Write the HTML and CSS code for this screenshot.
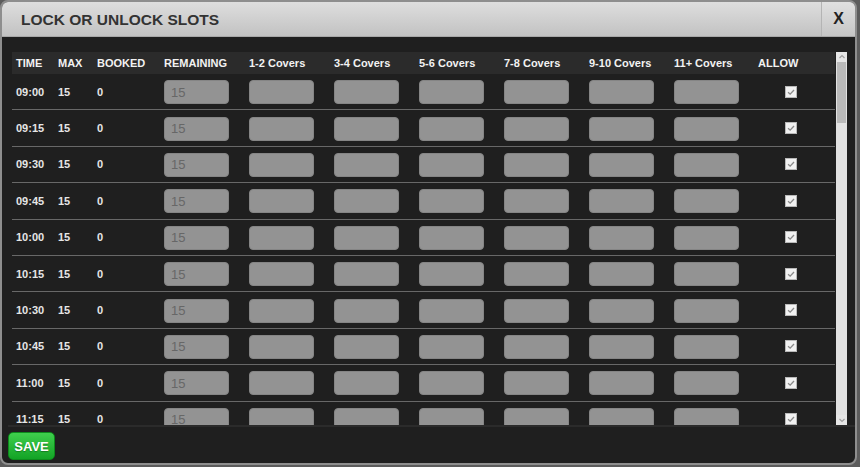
FILE: index.html
```html
<!DOCTYPE html>
<html lang="en">
<head>
  <meta charset="UTF-8" />
  <title>Lock or Unlock Slots</title>
  <link rel="stylesheet" href="styles.css">
</head>
<body>

  <div class="dialog">
    <!-- Title bar -->
    <div class="titlebar">
      <h2 class="title">LOCK OR UNLOCK SLOTS</h2>
      <button class="close" type="button">X</button>
    </div>

    <div class="dialog-body">
      <div class="scroll-area">
        <div class="slots">
          <div class="row head">
            <span>TIME</span><span>MAX</span><span>BOOKED</span><span>REMAINING</span>
            <span>1-2 Covers</span><span>3-4 Covers</span><span>5-6 Covers</span>
            <span>7-8 Covers</span><span>9-10 Covers</span><span>11+ Covers</span>
            <span>ALLOW</span>
          </div>

          <div class="row">
            <span>09:00</span><span>15</span><span>0</span>
            <span><input class="cell-input" type="text" value="15" readonly></span>
            <span><input class="cell-input" type="text"></span><span><input class="cell-input" type="text"></span>
            <span><input class="cell-input" type="text"></span><span><input class="cell-input" type="text"></span>
            <span><input class="cell-input" type="text"></span><span><input class="cell-input" type="text"></span>
            <span class="allow"><span class="check"><svg viewBox="0 0 12 12"><path d="M2.5 6.2 L5 8.6 L9.6 3.6"/></svg></span></span>
          </div>
          <div class="row">
            <span>09:15</span><span>15</span><span>0</span>
            <span><input class="cell-input" type="text" value="15" readonly></span>
            <span><input class="cell-input" type="text"></span><span><input class="cell-input" type="text"></span>
            <span><input class="cell-input" type="text"></span><span><input class="cell-input" type="text"></span>
            <span><input class="cell-input" type="text"></span><span><input class="cell-input" type="text"></span>
            <span class="allow"><span class="check"><svg viewBox="0 0 12 12"><path d="M2.5 6.2 L5 8.6 L9.6 3.6"/></svg></span></span>
          </div>
          <div class="row">
            <span>09:30</span><span>15</span><span>0</span>
            <span><input class="cell-input" type="text" value="15" readonly></span>
            <span><input class="cell-input" type="text"></span><span><input class="cell-input" type="text"></span>
            <span><input class="cell-input" type="text"></span><span><input class="cell-input" type="text"></span>
            <span><input class="cell-input" type="text"></span><span><input class="cell-input" type="text"></span>
            <span class="allow"><span class="check"><svg viewBox="0 0 12 12"><path d="M2.5 6.2 L5 8.6 L9.6 3.6"/></svg></span></span>
          </div>
          <div class="row">
            <span>09:45</span><span>15</span><span>0</span>
            <span><input class="cell-input" type="text" value="15" readonly></span>
            <span><input class="cell-input" type="text"></span><span><input class="cell-input" type="text"></span>
            <span><input class="cell-input" type="text"></span><span><input class="cell-input" type="text"></span>
            <span><input class="cell-input" type="text"></span><span><input class="cell-input" type="text"></span>
            <span class="allow"><span class="check"><svg viewBox="0 0 12 12"><path d="M2.5 6.2 L5 8.6 L9.6 3.6"/></svg></span></span>
          </div>
          <div class="row">
            <span>10:00</span><span>15</span><span>0</span>
            <span><input class="cell-input" type="text" value="15" readonly></span>
            <span><input class="cell-input" type="text"></span><span><input class="cell-input" type="text"></span>
            <span><input class="cell-input" type="text"></span><span><input class="cell-input" type="text"></span>
            <span><input class="cell-input" type="text"></span><span><input class="cell-input" type="text"></span>
            <span class="allow"><span class="check"><svg viewBox="0 0 12 12"><path d="M2.5 6.2 L5 8.6 L9.6 3.6"/></svg></span></span>
          </div>
          <div class="row">
            <span>10:15</span><span>15</span><span>0</span>
            <span><input class="cell-input" type="text" value="15" readonly></span>
            <span><input class="cell-input" type="text"></span><span><input class="cell-input" type="text"></span>
            <span><input class="cell-input" type="text"></span><span><input class="cell-input" type="text"></span>
            <span><input class="cell-input" type="text"></span><span><input class="cell-input" type="text"></span>
            <span class="allow"><span class="check"><svg viewBox="0 0 12 12"><path d="M2.5 6.2 L5 8.6 L9.6 3.6"/></svg></span></span>
          </div>
          <div class="row">
            <span>10:30</span><span>15</span><span>0</span>
            <span><input class="cell-input" type="text" value="15" readonly></span>
            <span><input class="cell-input" type="text"></span><span><input class="cell-input" type="text"></span>
            <span><input class="cell-input" type="text"></span><span><input class="cell-input" type="text"></span>
            <span><input class="cell-input" type="text"></span><span><input class="cell-input" type="text"></span>
            <span class="allow"><span class="check"><svg viewBox="0 0 12 12"><path d="M2.5 6.2 L5 8.6 L9.6 3.6"/></svg></span></span>
          </div>
          <div class="row">
            <span>10:45</span><span>15</span><span>0</span>
            <span><input class="cell-input" type="text" value="15" readonly></span>
            <span><input class="cell-input" type="text"></span><span><input class="cell-input" type="text"></span>
            <span><input class="cell-input" type="text"></span><span><input class="cell-input" type="text"></span>
            <span><input class="cell-input" type="text"></span><span><input class="cell-input" type="text"></span>
            <span class="allow"><span class="check"><svg viewBox="0 0 12 12"><path d="M2.5 6.2 L5 8.6 L9.6 3.6"/></svg></span></span>
          </div>
          <div class="row">
            <span>11:00</span><span>15</span><span>0</span>
            <span><input class="cell-input" type="text" value="15" readonly></span>
            <span><input class="cell-input" type="text"></span><span><input class="cell-input" type="text"></span>
            <span><input class="cell-input" type="text"></span><span><input class="cell-input" type="text"></span>
            <span><input class="cell-input" type="text"></span><span><input class="cell-input" type="text"></span>
            <span class="allow"><span class="check"><svg viewBox="0 0 12 12"><path d="M2.5 6.2 L5 8.6 L9.6 3.6"/></svg></span></span>
          </div>
          <div class="row">
            <span>11:15</span><span>15</span><span>0</span>
            <span><input class="cell-input" type="text" value="15" readonly></span>
            <span><input class="cell-input" type="text"></span><span><input class="cell-input" type="text"></span>
            <span><input class="cell-input" type="text"></span><span><input class="cell-input" type="text"></span>
            <span><input class="cell-input" type="text"></span><span><input class="cell-input" type="text"></span>
            <span class="allow"><span class="check"><svg viewBox="0 0 12 12"><path d="M2.5 6.2 L5 8.6 L9.6 3.6"/></svg></span></span>
          </div>
        </div>

        <!-- scrollbar -->
        <div class="scrollbar">
          <span class="sb-btn"><svg viewBox="0 0 10 10"><path d="M2.5 6 L5 3.5 L7.5 6"/></svg></span>
          <span class="sb-thumb"></span>
          <span class="sb-track"></span>
          <span class="sb-btn"><svg viewBox="0 0 10 10"><path d="M2.5 4 L5 6.5 L7.5 4"/></svg></span>
        </div>
      </div>

      <div class="footer">
        <button type="button" class="save">SAVE</button>
      </div>
    </div>
  </div>

</body>
</html>
```

FILE: styles.css
```css
* {
  box-sizing: border-box;
}

body {
  margin: 0;
  background: #5c5c5c;
  font-family: 'Liberation Sans', Arial, sans-serif;
}

.dialog {
  width: 857px;
  height: 465px;
  border: 2px solid #8e8e8e;
  border-radius: 8px;
  background: #1f1f1f;
  overflow: hidden;
  display: flex;
  flex-direction: column;
}

/* Title bar */
.titlebar {
  height: 35px;
  display: flex;
  align-items: stretch;
  background: linear-gradient(to bottom, #dedede, #c2c2c2);
  border-bottom: 1px solid #a8a8a8;
}

.title {
  flex: 1;
  margin: 0;
  padding-left: 19px;
  font-size: 15.5px;
  font-weight: bold;
  color: #333333;
  line-height: 35px;
}

.close {
  width: 34px;
  border: none;
  border-left: 1px solid #b4b4b4;
  background: linear-gradient(to bottom, #e0e0e0, #c6c6c6);
  font-family: 'Liberation Sans', Arial, sans-serif;
  font-size: 16px;
  font-weight: bold;
  color: #222;
  padding: 0;
  cursor: pointer;
}

/* Body */
.dialog-body {
  flex: 1;
  display: flex;
  flex-direction: column;
  padding: 15px 8px 0 10px;
}

.scroll-area {
  height: 373px;
  display: flex;
  overflow: hidden;
}

.slots {
  width: 825px;
  overflow: hidden;
}

.row {
  display: grid;
  grid-template-columns: 42px 39px 67px repeat(6, 85px) 84px 81px;
  align-items: center;
  height: 36.4px;
  border-bottom: 1px solid #686868;
  font-size: 11px;
  font-weight: bold;
  color: #e6e6e6;
}

.row > span {
  padding-left: 4px;
}

.row.head {
  height: 22px;
  background: #2b2b2b;
  border-bottom: none;
  color: #f2f2f2;
}

.cell-input {
  display: block;
  width: 65px;
  height: 24px;
  margin-top: 1px;
  background: #939393;
  border: 1px solid #858585;
  border-radius: 4px;
  padding: 0 6px;
  font-family: 'Liberation Sans', Arial, sans-serif;
  font-size: 13px;
  color: #676767;
  outline: none;
}

.row > .allow {
  padding-left: 31px;
  display: flex;
}

.check {
  width: 12px;
  height: 12px;
  background: #f1f1f1;
  border: 1px solid #b8b8b8;
  display: flex;
}

.check svg {
  width: 10px;
  height: 10px;
  fill: none;
  stroke: #8a8a8a;
  stroke-width: 1.6;
}

/* Scrollbar */
.scrollbar {
  width: 11px;
  margin-left: 1px;
  display: flex;
  flex-direction: column;
  background: #e2e2e2;
}

.sb-btn {
  height: 10px;
  display: flex;
  justify-content: center;
  background: #e6e6e6;
}

.sb-btn svg {
  width: 10px;
  height: 10px;
  fill: none;
  stroke: #a0a0a0;
  stroke-width: 1.2;
}

.sb-thumb {
  height: 61px;
  background: #bababa;
  margin: 0 1px;
}

.sb-track {
  flex: 1;
}

/* Footer */
.footer {
  border-top: 2px solid #2b2b2b;
  margin: 0 -8px 0 -4px;
  padding: 5px 0 0 0;
  height: 37px;
}

.save {
  width: 47px;
  height: 28px;
  border: 1px solid #0d8a1c;
  border-radius: 5px;
  background: linear-gradient(to bottom, #3fcf4d, #13a326);
  color: #ffffff;
  font-family: 'Liberation Sans', Arial, sans-serif;
  font-size: 13px;
  font-weight: bold;
  padding: 0;
  text-shadow: 0 1px 1px rgba(0, 0, 0, 0.3);
  cursor: pointer;
}
```
